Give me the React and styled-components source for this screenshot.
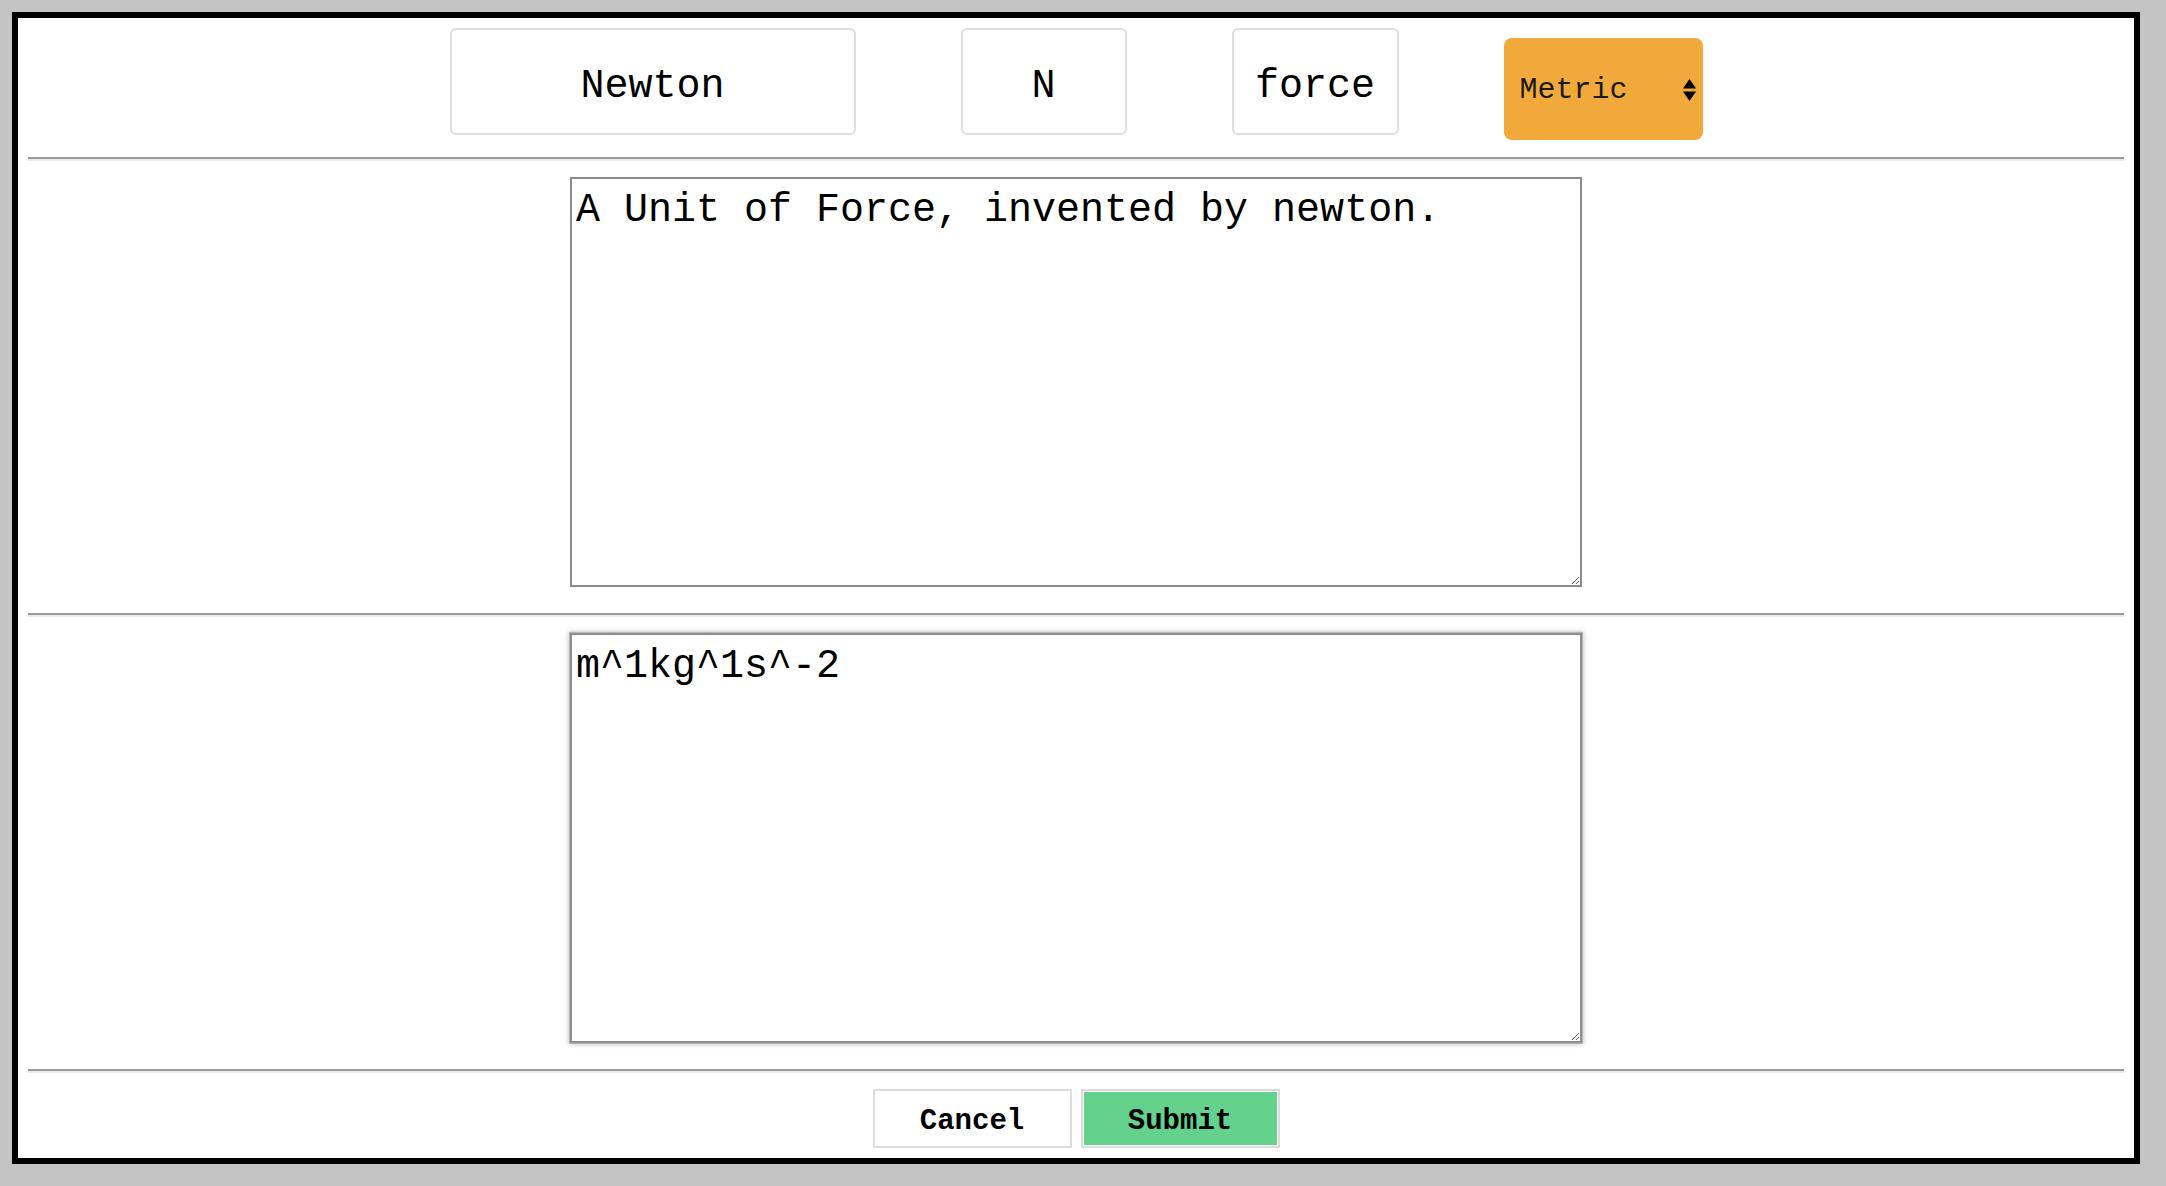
import React from "react";
import styled, { createGlobalStyle } from "styled-components";

const GlobalStyle = createGlobalStyle`
  html, body {
    margin: 0;
    padding: 0;
    background: #c4c4c4;
  }
  body {
    padding: 12px;
    font-family: "Liberation Mono", "Courier New", monospace;
  }
  * { box-sizing: border-box; }
`;

const Card = styled.div`
  width: 2128px;
  height: 1152px;
  border: 6px solid #000;
  background: #fff;
  padding: 10px;
  display: flex;
  flex-direction: column;
`;

const TopRow = styled.div`
  display: flex;
  justify-content: center;
  align-items: flex-start;
  gap: 105px;
`;

const FieldInput = styled.input`
  width: ${(p) => p.$w}px;
  height: 107px;
  border: 2px solid #dedede;
  border-radius: 6px;
  background: #fff;
  font-family: "Liberation Mono", "Courier New", monospace;
  font-size: 40px;
  color: #000;
  text-align: center;
  padding: 10px 4px 0;
  outline: none;
`;

const SelectBox = styled.div`
  margin-top: 10px;
  width: 199px;
  height: 102px;
  background: #f2a93b;
  border-radius: 8px;
  display: flex;
  align-items: center;
  justify-content: space-between;
  padding: 2px 7px 0 16px;
  font-family: "Liberation Mono", "Courier New", monospace;
  font-size: 30px;
  color: #1a1a1a;
`;

const Arrows = styled.svg`
  width: 13px;
  height: 22px;
`;

const Divider = styled.hr`
  width: 100%;
  height: 0;
  margin: 17px 0 16px;
  border: 0;
  border-top: 2px solid #9a9a9a;
  border-bottom: 2px solid #ececec;
`;

const TextBox = styled.textarea`
  display: block;
  margin: 0 auto 9px;
  width: 1012px;
  height: 411px;
  border: 2px solid ${(p) => (p.$focused ? "#8e8e8e" : "#8a8a8a")};
  box-shadow: ${(p) =>
    p.$focused ? "0 0 0 1px #b8b8b8, 0 0 5px 1px #b5b5b5" : "none"};
  padding: 9px 4px 2px;
  font-family: "Liberation Mono", "Courier New", monospace;
  font-size: 40px;
  line-height: 1.13;
  color: #000;
  background: #fff;
  outline: none;
`;

const ButtonRow = styled.div`
  display: flex;
  justify-content: center;
  gap: 9px;
`;

const Button = styled.button`
  width: 199px;
  height: 59px;
  border: 2px solid #dcdcdc;
  background: ${(p) => (p.$primary ? "#64d28c" : "#fff")};
  box-shadow: ${(p) => (p.$primary ? "inset 0 0 0 1px #fff" : "none")};
  font-family: "Liberation Mono", "Courier New", monospace;
  font-weight: bold;
  font-size: 29px;
  color: #000;
  padding: 5px 0 0;
  cursor: pointer;
`;

export default function App() {
  return (
    <>
      <GlobalStyle />
      <Card>
        <TopRow>
          <FieldInput $w={406} defaultValue="Newton" />
          <FieldInput $w={166} defaultValue="N" />
          <FieldInput $w={167} defaultValue="force" />
          <SelectBox>
            <span>Metric</span>
            <Arrows viewBox="0 0 13 22">
              <path d="M6.5 0 L13 9.5 L0 9.5 Z" fill="#000" />
              <path d="M0 12.5 L13 12.5 L6.5 22 Z" fill="#000" />
            </Arrows>
          </SelectBox>
        </TopRow>
        <Divider />
        <TextBox defaultValue="A Unit of Force, invented by newton." />
        <Divider />
        <TextBox $focused defaultValue="m^1kg^1s^-2" />
        <Divider />
        <ButtonRow>
          <Button>Cancel</Button>
          <Button $primary>Submit</Button>
        </ButtonRow>
      </Card>
    </>
  );
}
